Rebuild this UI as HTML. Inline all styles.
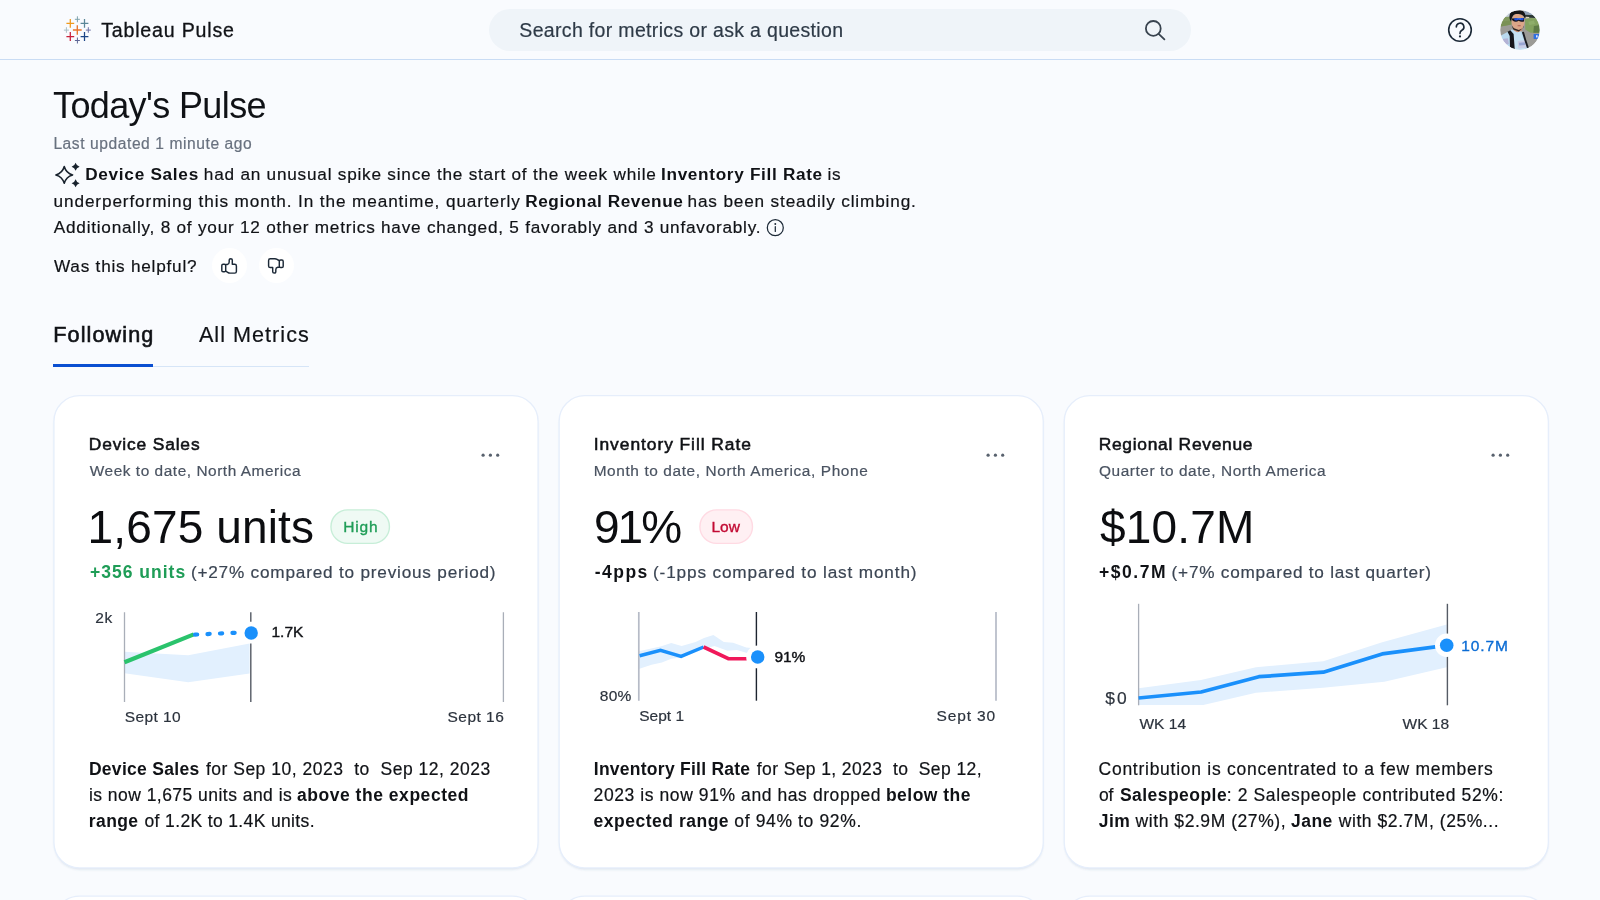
<!DOCTYPE html>
<html lang="en">
<head>
<meta charset="utf-8">
<title>Tableau Pulse</title>
<style>
*{box-sizing:border-box;margin:0;padding:0}
html,body{width:1600px;height:900px;overflow:hidden}
body{background:#f9fbfe;font-family:"Liberation Sans",sans-serif;position:relative}
.t{position:absolute;white-space:pre;line-height:1;font-weight:400}
.hdr{position:absolute;left:0;top:0;width:1600px;height:59.5px;background:#f9fbfe;border-bottom:1.3px solid #c9dcf4}
.search{position:absolute;left:488.8px;top:8.5px;width:702.7px;height:42.8px;border-radius:21.4px;background:#eff4f9}
.fb{position:absolute;width:35px;height:35px;border-radius:50%;background:#fff;top:248.3px}
.tabline{position:absolute;left:153px;top:365.6px;width:156px;height:1.3px;background:#d6e5f7}
.tabsel{position:absolute;left:53.4px;top:364px;width:99.8px;height:3.4px;background:#0b4fd1}
.tl{position:absolute;left:0;top:0;width:1600px;height:900px;will-change:transform}
svg.ov{position:absolute;left:0;top:0;width:1600px;height:900px;overflow:visible}
</style>
</head>
<body>
<div class="hdr"></div>
<div class="search"></div>

<div class="fb" style="left:211.7px"></div>
<div class="fb" style="left:258.8px"></div>
<div class="tabline"></div>
<div class="tabsel"></div>


<svg class="ov" viewBox="0 0 1600 900">
<defs><filter id="sh" x="-5%" y="-5%" width="110%" height="110%"><feGaussianBlur stdDeviation="1.3"/></filter></defs>
<g fill="#46648f" fill-opacity=".16" filter="url(#sh)">
<rect x="54.5" y="398" width="483" height="471.500" rx="25"/><rect x="559.700" y="398" width="483" height="471.500" rx="25"/><rect x="1064.800" y="398" width="483" height="471.500" rx="25"/>
</g>
<g fill="#fff" stroke="#e6eefb" stroke-width="1.300">
<rect x="53.950" y="395.700" width="484.100" height="472.200" rx="25.500"/><rect x="559.150" y="395.700" width="484.100" height="472.200" rx="25.500"/><rect x="1064.250" y="395.700" width="484.100" height="472.200" rx="25.500"/>
<rect x="53.950" y="896.100" width="484.100" height="472.200" rx="25.500"/><rect x="559.150" y="896.100" width="484.100" height="472.200" rx="25.500"/><rect x="1064.250" y="896.100" width="484.100" height="472.200" rx="25.500"/>
</g>
<rect x="330.950" y="509.900" width="58.500" height="33.500" rx="16.750" fill="#effaf4" stroke="#c7eed8" stroke-width="1.400"/>
<rect x="699.900" y="509.900" width="52.600" height="33.500" rx="16.750" fill="#fff0f3" stroke="#ffdae3" stroke-width="1.400"/>
</svg>

<svg class="ov" viewBox="0 0 1600 900">
<!-- tableau logo -->
<g fill="none" stroke-linecap="butt">
  <path d="M77.3 15.2v9.6M72.9 20h8.8" stroke="#e8762d" stroke-width="1.35" transform="translate(0 10)"/>
  <path d="M70.3 19v8.8M66.4 23.4h7.8" stroke="#ef9a1e" stroke-width="1.25"/>
  <path d="M84.5 19v8.8M80.6 23.4h7.8" stroke="#5b8797" stroke-width="1.25"/>
  <path d="M70.3 32.1v8.8M66.4 36.5h7.8" stroke="#c8203b" stroke-width="1.25"/>
  <path d="M84.5 32.1v8.8M80.6 36.5h7.8" stroke="#1c4586" stroke-width="1.25"/>
  <path d="M77.4 16.3v6M74.9 19.3h5" stroke="#7fa3ac" stroke-width="1"/>
  <path d="M77.4 37.5v6M74.9 40.5h5" stroke="#5d6595" stroke-width="1"/>
  <path d="M66.4 27.2v5.6M63.9 30.1h5" stroke="#a9c0c6" stroke-width="1"/>
  <path d="M88.3 27.2v5.6M85.8 30.1h5" stroke="#6e73a6" stroke-width="1"/>
</g>
<!-- search icon -->
<g fill="none" stroke="#38434f" stroke-width="1.8" stroke-linecap="round">
  <circle cx="1153.3" cy="28.4" r="7.4"/>
  <path d="M1158.9 34.1L1164.4 39.4"/>
</g>
<!-- help icon -->
<g fill="none" stroke="#1c2937" stroke-width="1.6" stroke-linecap="round">
  <circle cx="1460" cy="30" r="11.3"/>
  <path d="M1456.3 26.9a3.8 3.8 0 1 1 5.6 3.4c-1.3 .8-1.9 1.5-1.9 2.9v.4"/>
</g>
<circle cx="1460" cy="36.4" r="1.1" fill="#1c2937"/>
<!-- avatar -->
<defs><clipPath id="av"><circle cx="1520" cy="30" r="19.9"/></clipPath>
<filter id="bl" x="-10%" y="-10%" width="120%" height="120%"><feGaussianBlur stdDeviation="0.45"/></filter></defs>
<g clip-path="url(#av)"><g filter="url(#bl)">
  <rect x="1498" y="8" width="44" height="44" fill="#9c9b97"/>
  <polygon points="1499.44,9.44 1511.67,9.44 1511.67,16.67 1499.44,17.78" fill="#c3cdd6"/>
  <polygon points="1499.44,17.5 1511.11,16.39 1511.67,24.44 1499.44,26.67" fill="#82995f"/>
  <polygon points="1499.44,21.67 1511.11,20.56 1511.39,24.44 1499.44,26.67" fill="#7a9156"/>
  <polygon points="1523.89,9.44 1540.56,9.44 1540.56,16.11 1523.89,15.56" fill="#93a3b6"/>
  <polygon points="1524.44,14.72 1536.11,15.28 1536.11,18.06 1524.44,17.5" fill="#2b3533"/>
  <polygon points="1525.83,16.78 1529.17,16.89 1529.17,18.33 1525.83,18.33" fill="#d9d3ba"/>
  <polygon points="1525.0,18.89 1530.56,17.89 1537.22,18.33 1540.56,21.67 1540.56,32.78 1530.56,32.78 1525.28,29.44" fill="#84a25f"/>
  <polygon points="1533.89,26.11 1540.56,25.0 1540.56,32.78 1533.33,32.78" fill="#5d7a44"/>
  <polygon points="1528.33,21.67 1533.89,20.56 1535.0,23.89 1529.44,25.0" fill="#8fae6b"/>
  <rect x="1533.61" y="33.89" width="7" height="5.0" rx=".5" fill="#2f6fe0"/>
  <rect x="1536.0" y="35.28" width="1.6" height="2.2" fill="#dfe8fa"/>
  <!-- shirt -->
  <polygon points="1500.0,36.11 1506.11,32.78 1511.67,29.44 1521.11,31.11 1523.89,36.11 1529.44,49.44 1529.44,51.11 1500.0,51.11" fill="#b9d9ef"/>
  <polygon points="1513.33,31.11 1520.0,31.67 1523.89,40.56 1525.0,49.44 1514.44,49.44" fill="#c6e1f3"/>
  <polygon points="1502.22,38.89 1507.78,38.33 1508.89,43.89 1504.44,45.0" fill="#b4b3d6"/>
  <polygon points="1517.78,41.11 1525.56,40.28 1526.39,47.78 1518.33,48.61" fill="#c9cde6"/>
  <polygon points="1518.89,42.78 1525.0,42.22 1525.28,45.0 1519.17,45.56" fill="#9aa6d3"/>
  <!-- straps -->
  <polygon points="1507.5,31.67 1510.28,30.28 1513.61,33.89 1514.72,48.89 1510.0,47.78 1509.72,36.11" fill="#17181b"/>
  <polygon points="1521.94,32.22 1523.89,31.67 1526.11,39.44 1528.89,47.78 1526.94,48.06 1524.44,40.56" fill="#1d1e22"/>
  <!-- neck + face -->
  <polygon points="1513.33,27.22 1522.78,27.22 1521.67,31.11 1517.22,32.22 1513.89,30.56" fill="#c88f72"/>
  <ellipse cx="1518.06" cy="21.67" rx="6.56" ry="8.33" fill="#dba688"/>
  <polygon points="1511.67,25.56 1513.33,29.44 1518.89,31.39 1523.61,27.22 1523.89,25.56 1522.78,28.33 1518.89,30.0 1513.89,28.33" fill="#2a2422"/>
  <ellipse cx="1519.17" cy="25.67" rx="1.8" ry=".6" fill="#b96a5e"/>
  <!-- helmet -->
  <path d="M1509.72 18.89C1508.33 11.67 1513.33 9.89 1517.78 10.0C1522.78 10.11 1526.67 12.22 1524.72 18.33C1523.89 15.0 1521.11 13.89 1517.22 13.89C1513.89 13.89 1511.67 15.56 1511.11 21.67Z" fill="#121317"/>
  <!-- glasses -->
  <path d="M1511.22 18.61L1524.17 18.06L1524.0 21.39C1521.67 22.33 1520.0 21.67 1518.61 20.83C1516.94 22.22 1514.44 21.94 1512.78 20.83Z" fill="#14161f"/>
  <path d="M1514.17 18.33L1523.61 18.11L1523.44 19.89C1521.11 20.67 1519.44 20.0 1518.61 19.56C1517.22 20.67 1515.28 20.56 1514.33 19.89Z" fill="#1d4fe6"/>
  <path d="M1517.22 18.5L1521.11 18.39L1520.83 19.22L1517.5 19.33Z" fill="#4f8cf5"/>
</g></g>
<circle cx="1520" cy="30" r="20.3" fill="none" stroke="#f9fbfe" stroke-width="1"/>
<!-- sparkle -->
<path d="M64.25 166.50Q66.05 173.10 72.65 174.9Q66.05 176.70 64.25 183.30Q62.45 176.70 55.85 174.9Q62.45 173.10 64.25 166.50Z" fill="none" stroke="#18222d" stroke-width="1.55" stroke-linejoin="round"/>
<path d="M75.6 162.750Q76.500 165.850 79.600 166.750Q76.500 167.650 75.600 170.750Q74.700 167.650 71.600 166.750Q74.700 165.850 75.600 162.750Z" fill="#18222d"/>
<path d="M75.6 179.250Q76.500 182.350 79.600 183.250Q76.500 184.150 75.600 187.250Q74.700 184.150 71.600 183.250Q74.700 182.350 75.600 179.250Z" fill="#18222d"/>
<!-- info icon -->
<g fill="none" stroke="#1c2937" stroke-width="1.25" stroke-linecap="round">
  <circle cx="775.3" cy="227.700" r="8"/>
  <path d="M775.3 226.700v4.700"/>
</g>
<circle cx="775.3" cy="224" r=".95" fill="#1c2937"/>
<!-- thumbs -->
<g fill="none" stroke="#1c2937" stroke-width="1.45" stroke-linejoin="round" stroke-linecap="round">
  <rect x="221.800" y="264.200" width="3.900" height="7.500" rx="1.300"/>
  <path d="M225.800 264.500H227.300Q229.200 264.100 229.200 262V259.900Q229.200 258.750 230.750 258.750Q232.300 258.750 232.300 260.100V264.200H234.700Q236.400 264.200 236.400 265.900V271.400Q236.400 273.100 234.700 273.100H230.200Q228.800 273.100 227.700 272.300L225.800 271.200"/>
</g>
<g fill="none" stroke="#1c2937" stroke-width="1.45" stroke-linejoin="round" stroke-linecap="round" transform="translate(505 531.800) rotate(180)">
  <rect x="221.800" y="264.200" width="3.900" height="7.500" rx="1.300"/>
  <path d="M225.800 264.500H227.300Q229.200 264.100 229.200 262V259.900Q229.200 258.750 230.750 258.750Q232.300 258.750 232.300 260.100V264.200H234.700Q236.400 264.200 236.400 265.900V271.400Q236.400 273.100 234.700 273.100H230.200Q228.800 273.100 227.700 272.300L225.800 271.200"/>
</g>
<!-- menu dots -->
<g fill="#59626e">
  <circle cx="483.100" cy="455.200" r="1.600"/><circle cx="490.400" cy="455.200" r="1.600"/><circle cx="497.700" cy="455.200" r="1.600"/>
  <circle cx="988.100" cy="455.200" r="1.600"/><circle cx="995.400" cy="455.200" r="1.600"/><circle cx="1002.700" cy="455.200" r="1.600"/>
  <circle cx="1493.100" cy="455.200" r="1.600"/><circle cx="1500.400" cy="455.200" r="1.600"/><circle cx="1507.700" cy="455.200" r="1.600"/>
</g>

<!-- chart 1 -->
<path d="M124.5 651.750L188.250 655.200L249.600 643.500V673.500L188.250 682.200L124.500 673.200Z" fill="#e2f0fe"/>
<path d="M124.500 612.300V702M503.400 612.300V702" stroke="#a9aeb8" stroke-width="1.300"/>
<path d="M250.800 612.300V621.800M250.800 643.600V702" stroke="#555b65" stroke-width="1.400"/>
<path d="M124.500 662.200L193.800 634.400" stroke="#2ac36c" stroke-width="4.200" stroke-linecap="butt"/>
<path d="M195 634.600L238 632.700" stroke="#1a90fb" stroke-width="4.200" stroke-linecap="round" stroke-dasharray="2.200 10.300"/>
<circle cx="251.200" cy="633" r="6.700" fill="#1a90fb"/>

<!-- chart 2 -->
<path d="M638.700 651.250L660.500 646.400L671.250 643L681.600 646.100L695.600 641.900L704 638.100L713.400 635.100L723.750 641.900L733.100 642.800L746.250 647.500L751.500 648V653L746.250 652.700L736.900 650.100L727.500 650.800L714.400 646.100L703.600 649L682.500 657.300L671.250 658.750L661.900 662.500L651.600 664.800L638.700 669.100Z" fill="#e2f0fe"/>
<path d="M638.800 612V700.700M996 612V700.700" stroke="#b6bbc7" stroke-width="1.700"/>
<path d="M756.400 612V700.700" stroke="#1d2430" stroke-width="1.400"/>
<path d="M639.600 655.700L660.500 650.300L681.100 656.400L703.600 647" fill="none" stroke="#1a90fb" stroke-width="3.500" stroke-linejoin="miter"/>
<path d="M703.600 647L728.400 658.750H746.700" fill="none" stroke="#f0185a" stroke-width="3.600" stroke-linejoin="miter"/>
<circle cx="757.700" cy="656.900" r="11.400" fill="#fff"/>
<circle cx="757.700" cy="656.900" r="6.750" fill="#1a90fb"/>

<!-- chart 3 -->
<path d="M1138.600 688.300L1201 680L1256 667.200L1323.300 661.300L1382.200 642.200L1446.700 624.400V667.200L1384.400 681.700L1323 687.800L1256 692.800L1203.300 705H1138.600Z" fill="#e2f0fe"/>
<path d="M1138.600 603.800V705.300" stroke="#a9aeb8" stroke-width="1.300"/>
<path d="M1447.400 603.800V705.300" stroke="#555b65" stroke-width="1.400"/>
<path d="M1138.600 698L1201.100 692L1258.900 676.700L1323.300 672.200L1382.200 653.900L1446.700 645.300" fill="none" stroke="#1a90fb" stroke-width="3.700" stroke-linejoin="round"/>
<circle cx="1446.700" cy="645.300" r="11.700" fill="#fff"/>
<circle cx="1446.700" cy="645.300" r="6.800" fill="#1a90fb"/>

</svg>

<div class="tl">
<span class="t" style="left:101.17px;top:21.25px;font-size:19.6px;color:#101216;letter-spacing:0.805px;-webkit-text-stroke:0.3px #101216;">Tableau Pulse</span>
<span class="t" style="left:519.37px;top:21.00px;font-size:19.5px;color:#2e3a47;letter-spacing:0.329px;-webkit-text-stroke:0.2px #2e3a47;">Search for metrics or ask a question</span>
<span class="t" style="left:53.00px;top:87.50px;font-size:36px;color:#101216;letter-spacing:-0.622px;">Today's Pulse</span>
<span class="t" style="left:53.38px;top:135.60px;font-size:15.6px;color:#68717f;letter-spacing:0.568px;-webkit-text-stroke:0.2px #68717f;">Last updated 1 minute ago</span>
<span class="t" style="left:85.20px;top:166.30px;font-size:17.2px;color:#101216;letter-spacing:0.718px;font-weight:700;">Device Sales</span>
<span class="t" style="left:203.84px;top:166.30px;font-size:17.2px;color:#101216;letter-spacing:0.776px;-webkit-text-stroke:0.2px #101216;">had an unusual spike since the start of the week while</span>
<span class="t" style="left:661.00px;top:166.30px;font-size:17.2px;color:#101216;letter-spacing:0.676px;font-weight:700;">Inventory Fill Rate</span>
<span class="t" style="left:827.57px;top:166.30px;font-size:17.2px;color:#101216;letter-spacing:0.727px;-webkit-text-stroke:0.2px #101216;">is</span>
<span class="t" style="left:53.56px;top:192.70px;font-size:17.2px;color:#101216;letter-spacing:0.886px;-webkit-text-stroke:0.2px #101216;">underperforming this month. In the meantime, quarterly</span>
<span class="t" style="left:525.19px;top:192.70px;font-size:17.2px;color:#101216;letter-spacing:0.576px;font-weight:700;">Regional Revenue</span>
<span class="t" style="left:687.54px;top:192.70px;font-size:17.2px;color:#101216;letter-spacing:0.844px;-webkit-text-stroke:0.2px #101216;">has been steadily climbing.</span>
<span class="t" style="left:53.78px;top:219.10px;font-size:17.2px;color:#101216;letter-spacing:0.767px;-webkit-text-stroke:0.2px #101216;">Additionally, 8 of your 12 other metrics have changed, 5 favorably and 3 unfavorably.</span>
<span class="t" style="left:54.00px;top:258.00px;font-size:17.2px;color:#101216;letter-spacing:0.770px;-webkit-text-stroke:0.2px #101216;">Was this helpful?</span>
<span class="t" style="left:53.25px;top:323.70px;font-size:21.6px;color:#101216;letter-spacing:1.098px;-webkit-text-stroke:0.6px #101216;">Following</span>
<span class="t" style="left:198.90px;top:323.70px;font-size:21.6px;color:#101216;letter-spacing:1.034px;-webkit-text-stroke:0.2px #101216;">All Metrics</span>
<span class="t" style="left:88.79px;top:436.40px;font-size:17.4px;color:#101216;letter-spacing:0.847px;-webkit-text-stroke:0.55px #101216;">Device Sales</span>
<span class="t" style="left:89.81px;top:462.60px;font-size:15.4px;color:#4a5361;letter-spacing:0.547px;-webkit-text-stroke:0.2px #4a5361;">Week to date, North America</span>
<span class="t" style="left:87.61px;top:504.00px;font-size:46px;color:#0c0d10;letter-spacing:0.128px;">1,675 units</span>
<span class="t" style="left:343.20px;top:519.20px;font-size:15.5px;color:#1f9d57;letter-spacing:0.847px;-webkit-text-stroke:0.35px #1f9d57;">High</span>
<span class="t" style="left:90.00px;top:563.50px;font-size:17.5px;color:#1f9d57;letter-spacing:1.010px;font-weight:700;">+356 units</span>
<span class="t" style="left:190.91px;top:563.50px;font-size:17.2px;color:#3b4553;letter-spacing:0.793px;-webkit-text-stroke:0.2px #3b4553;">(+27% compared to previous period)</span>
<span class="t" style="left:593.72px;top:436.40px;font-size:17.4px;color:#101216;letter-spacing:0.947px;-webkit-text-stroke:0.55px #101216;">Inventory Fill Rate</span>
<span class="t" style="left:593.67px;top:462.60px;font-size:15.4px;color:#4a5361;letter-spacing:0.614px;-webkit-text-stroke:0.2px #4a5361;">Month to date, North America, Phone</span>
<span class="t" style="left:593.90px;top:504.00px;font-size:46px;color:#0c0d10;letter-spacing:-1.858px;">91%</span>
<span class="t" style="left:711.59px;top:519.20px;font-size:15.5px;color:#c20a33;letter-spacing:-0.086px;-webkit-text-stroke:0.35px #c20a33;">Low</span>
<span class="t" style="left:594.79px;top:563.50px;font-size:17.5px;color:#101216;letter-spacing:1.448px;font-weight:700;">-4pps</span>
<span class="t" style="left:653.00px;top:563.50px;font-size:17.2px;color:#3b4553;letter-spacing:0.852px;-webkit-text-stroke:0.2px #3b4553;">(-1pps compared to last month)</span>
<span class="t" style="left:1098.71px;top:436.40px;font-size:17.4px;color:#101216;letter-spacing:0.714px;-webkit-text-stroke:0.55px #101216;">Regional Revenue</span>
<span class="t" style="left:1098.95px;top:462.60px;font-size:15.4px;color:#4a5361;letter-spacing:0.586px;-webkit-text-stroke:0.2px #4a5361;">Quarter to date, North America</span>
<span class="t" style="left:1100.00px;top:504.00px;font-size:46px;color:#0c0d10;letter-spacing:0.184px;">$10.7M</span>
<span class="t" style="left:1099.00px;top:563.50px;font-size:17.5px;color:#101216;letter-spacing:1.551px;font-weight:700;">+$0.7M</span>
<span class="t" style="left:1171.62px;top:563.50px;font-size:17.2px;color:#3b4553;letter-spacing:0.758px;-webkit-text-stroke:0.2px #3b4553;">(+7% compared to last quarter)</span>
<span class="t" style="left:95.35px;top:610.30px;font-size:15.5px;color:#2c333d;letter-spacing:0.629px;-webkit-text-stroke:0.2px #2c333d;">2k</span>
<span class="t" style="left:271.48px;top:623.80px;font-size:15.5px;color:#101216;letter-spacing:0.008px;-webkit-text-stroke:0.4px #101216;">1.7K</span>
<span class="t" style="left:124.75px;top:709.00px;font-size:15.5px;color:#2c333d;letter-spacing:0.413px;-webkit-text-stroke:0.2px #2c333d;">Sept 10</span>
<span class="t" style="left:447.55px;top:709.00px;font-size:15.5px;color:#2c333d;letter-spacing:0.465px;-webkit-text-stroke:0.2px #2c333d;">Sept 16</span>
<span class="t" style="left:599.73px;top:687.50px;font-size:15.5px;color:#2c333d;letter-spacing:0.288px;-webkit-text-stroke:0.2px #2c333d;">80%</span>
<span class="t" style="left:774.56px;top:649.00px;font-size:15.5px;color:#101216;letter-spacing:-0.194px;-webkit-text-stroke:0.4px #101216;">91%</span>
<span class="t" style="left:639.26px;top:708.30px;font-size:15.5px;color:#2c333d;letter-spacing:-0.007px;-webkit-text-stroke:0.2px #2c333d;">Sept 1</span>
<span class="t" style="left:936.55px;top:708.30px;font-size:15.5px;color:#2c333d;letter-spacing:0.864px;-webkit-text-stroke:0.2px #2c333d;">Sept 30</span>
<span class="t" style="left:1105.14px;top:689.70px;font-size:17.4px;color:#2c333d;letter-spacing:2.275px;-webkit-text-stroke:0.2px #2c333d;">$0</span>
<span class="t" style="left:1461.20px;top:637.90px;font-size:15.5px;color:#0b6cd4;letter-spacing:0.908px;-webkit-text-stroke:0.35px #0b6cd4;">10.7M</span>
<span class="t" style="left:1139.48px;top:715.80px;font-size:15.5px;color:#2c333d;letter-spacing:0.021px;-webkit-text-stroke:0.2px #2c333d;">WK 14</span>
<span class="t" style="left:1402.51px;top:715.60px;font-size:15.5px;color:#2c333d;letter-spacing:-0.002px;-webkit-text-stroke:0.2px #2c333d;">WK 18</span>
<span class="t" style="left:88.90px;top:761.30px;font-size:17.5px;color:#101216;letter-spacing:0.306px;font-weight:700;">Device Sales</span>
<span class="t" style="left:205.89px;top:761.30px;font-size:17.5px;color:#101216;letter-spacing:0.510px;-webkit-text-stroke:0.2px #101216;">for Sep 10, 2023&nbsp; to&nbsp; Sep 12, 2023</span>
<span class="t" style="left:88.92px;top:787.20px;font-size:17.5px;color:#101216;letter-spacing:0.466px;-webkit-text-stroke:0.2px #101216;">is now 1,675 units and is</span>
<span class="t" style="left:296.96px;top:787.20px;font-size:17.5px;color:#101216;letter-spacing:0.535px;font-weight:700;">above the expected</span>
<span class="t" style="left:88.80px;top:813.00px;font-size:17.5px;color:#101216;letter-spacing:0.412px;font-weight:700;">range</span>
<span class="t" style="left:144.54px;top:813.00px;font-size:17.5px;color:#101216;letter-spacing:0.360px;-webkit-text-stroke:0.2px #101216;">of 1.2K to 1.4K units.</span>
<span class="t" style="left:593.80px;top:760.70px;font-size:17.5px;color:#101216;letter-spacing:0.256px;font-weight:700;">Inventory Fill Rate</span>
<span class="t" style="left:756.78px;top:760.70px;font-size:17.5px;color:#101216;letter-spacing:0.396px;-webkit-text-stroke:0.2px #101216;">for Sep 1, 2023&nbsp; to&nbsp; Sep 12,</span>
<span class="t" style="left:593.59px;top:786.70px;font-size:17.5px;color:#101216;letter-spacing:0.584px;-webkit-text-stroke:0.2px #101216;">2023 is now 91% and has dropped</span>
<span class="t" style="left:885.90px;top:786.70px;font-size:17.5px;color:#101216;letter-spacing:0.493px;font-weight:700;">below the</span>
<span class="t" style="left:593.61px;top:812.60px;font-size:17.5px;color:#101216;letter-spacing:0.507px;font-weight:700;">expected range</span>
<span class="t" style="left:734.34px;top:812.60px;font-size:17.5px;color:#101216;letter-spacing:0.633px;-webkit-text-stroke:0.2px #101216;">of 94% to 92%.</span>
<span class="t" style="left:1098.55px;top:760.70px;font-size:17.5px;color:#101216;letter-spacing:0.735px;-webkit-text-stroke:0.2px #101216;">Contribution is concentrated to a few members</span>
<span class="t" style="left:1099.04px;top:786.70px;font-size:17.5px;color:#101216;letter-spacing:-0.168px;-webkit-text-stroke:0.2px #101216;">of</span>
<span class="t" style="left:1119.97px;top:786.70px;font-size:17.5px;color:#101216;letter-spacing:0.453px;font-weight:700;">Salespeople</span>
<span class="t" style="left:1226.66px;top:786.70px;font-size:17.5px;color:#101216;letter-spacing:0.639px;-webkit-text-stroke:0.2px #101216;">: 2 Salespeople contributed 52%:</span>
<span class="t" style="left:1098.68px;top:812.60px;font-size:17.5px;color:#101216;letter-spacing:0.509px;font-weight:700;">Jim</span>
<span class="t" style="left:1135.58px;top:812.60px;font-size:17.5px;color:#101216;letter-spacing:0.558px;-webkit-text-stroke:0.2px #101216;">with $2.9M (27%),</span>
<span class="t" style="left:1290.98px;top:812.60px;font-size:17.5px;color:#101216;letter-spacing:0.482px;font-weight:700;">Jane</span>
<span class="t" style="left:1338.82px;top:812.60px;font-size:17.5px;color:#101216;letter-spacing:0.553px;-webkit-text-stroke:0.2px #101216;">with $2.7M, (25%...</span>
</div>
</body>
</html>
